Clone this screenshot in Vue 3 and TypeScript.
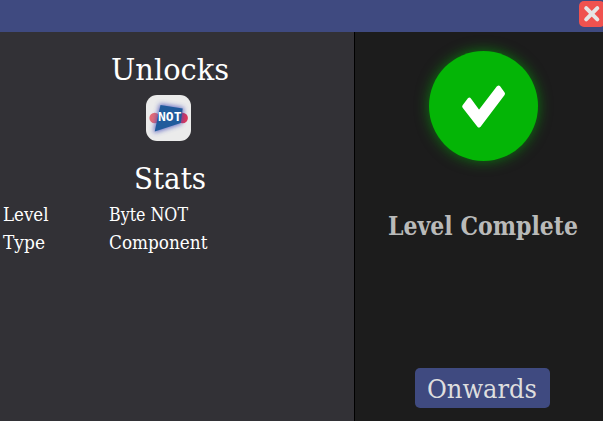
<script setup lang="ts">
interface Stat {
  label: string
  labelWidth: number
  value: string
  valueWidth: number
}

const stats: Stat[] = [
  { label: 'Level', labelWidth: 45.5, value: 'Byte NOT', valueWidth: 79 },
  { label: 'Type', labelWidth: 42, value: 'Component', valueWidth: 98.5 },
]
</script>

<template>
  <div class="window">
    <header class="titlebar">
      <button class="close" aria-label="Close">
        <svg width="26" height="26" viewBox="0 0 26 26">
          <path d="M7.2 7.2 L18.3 18.3 M18.3 7.2 L7.2 18.3" stroke="#e6e6e6" stroke-width="4" stroke-linecap="round" />
        </svg>
      </button>
    </header>
    <main class="content">
      <section class="details">
        <svg class="heading" width="118" height="32">
          <text x="0" y="24" textLength="118" lengthAdjust="spacingAndGlyphs">Unlocks</text>
        </svg>
        <div class="component-icon">
          <svg width="45" height="46" viewBox="0 0 45 46">
            <defs>
              <filter id="halo" x="-50%" y="-50%" width="200%" height="200%">
                <feGaussianBlur stdDeviation="2.6" />
              </filter>
            </defs>
            <circle cx="8.7" cy="23" r="5.3" fill="#e46c76" />
            <circle cx="36.6" cy="23" r="5.3" fill="#df3658" />
            <path d="M14.5 10 L36.7 13.5 L34.8 28 L8.7 36.5 Z" fill="#3f48b8" stroke="#3f48b8" stroke-width="2" opacity=".8" filter="url(#halo)" />
            <path d="M14.5 10 L36.7 13.5 L34.8 28 L8.7 36.5 Z" fill="#205b9c" />
            <text class="icon-text" x="12" y="26.3" textLength="23.5" lengthAdjust="spacingAndGlyphs">NOT</text>
          </svg>
        </div>
        <svg class="heading" width="72" height="32">
          <text x="0" y="24" textLength="72" lengthAdjust="spacingAndGlyphs">Stats</text>
        </svg>
        <div class="stats">
          <template v-for="stat in stats" :key="stat.label">
            <svg class="stat" width="106" height="28">
              <text x="0" y="20" :textLength="stat.labelWidth" lengthAdjust="spacingAndGlyphs">{{ stat.label }}</text>
            </svg>
            <svg class="stat" width="106" height="28">
              <text x="0" y="20" :textLength="stat.valueWidth" lengthAdjust="spacingAndGlyphs">{{ stat.value }}</text>
            </svg>
          </template>
        </div>
      </section>
      <aside class="result">
        <div class="badge">
          <svg width="109" height="110" viewBox="0 0 109 110">
            <path d="M40.3 48.7 L35.2 55.5 L50 74.5 L74 42.7 L69.5 36.5 L50 62 Z" fill="#fff" stroke="#fff" stroke-width="4" stroke-linejoin="round" />
          </svg>
        </div>
        <svg class="complete" width="190" height="36">
          <text x="0" y="25" textLength="190" lengthAdjust="spacingAndGlyphs">Level Complete</text>
        </svg>
        <button class="onwards">
          <svg width="110" height="40">
            <text x="0" y="30" textLength="110" lengthAdjust="spacingAndGlyphs">Onwards</text>
          </svg>
        </button>
      </aside>
    </main>
  </div>
</template>

<style>
body {
  margin: 0;
  overflow: hidden;
}
</style>

<style scoped>
.window {
  width: 603px;
  height: 421px;
  display: flex;
  flex-direction: column;
  overflow: hidden;
  background: #1c1c1c;
  font-family: "Roboto Slab", "DejaVu Serif Condensed", "DejaVu Serif", serif;
}
svg {
  display: block;
  flex: none;
  overflow: visible;
}
button {
  padding: 0;
  border: 0;
  font-family: inherit;
}
.titlebar {
  height: 32px;
  flex: none;
  display: flex;
  justify-content: flex-end;
  background: #3f4a80;
}
.close {
  width: 26px;
  height: 26px;
  margin: 1px -2px 0 0;
  border-radius: 5px;
  background: #f0524f;
}
.content {
  flex: 1;
  display: flex;
}
.details {
  width: 354px;
  box-sizing: border-box;
  flex: none;
  display: flex;
  flex-direction: column;
  align-items: center;
  padding: 24px 14px 0 0;
  background: #323136;
}
.heading text {
  font-size: 29px;
  fill: #fff;
}
.component-icon {
  width: 45px;
  height: 46px;
  margin: 7px 3px 24px 0;
  border-radius: 11px;
  background: #ebebeb;
}
.icon-text {
  font-family: "DejaVu Sans Mono", monospace;
  font-size: 13px;
  font-weight: bold;
  fill: #fff;
}
.stats {
  align-self: flex-start;
  display: grid;
  grid-template-columns: 106px 106px;
  padding-left: 3px;
  margin-top: 4px;
}
.stat text {
  font-size: 18px;
  fill: #fff;
}
.result {
  flex: 1;
  display: flex;
  flex-direction: column;
  align-items: center;
  border-left: 1px solid #000;
  padding: 19px 0 13px 8px;
}
.badge {
  width: 109px;
  height: 110px;
  border-radius: 50%;
  background: #04b506;
  box-shadow: 0 0 14px rgba(4, 181, 6, 0.6);
}
.complete {
  margin: 49px 1px 0 0;
}
.complete text {
  font-size: 26px;
  font-weight: bold;
  fill: #b9bab9;
}
.onwards {
  width: 135px;
  height: 40px;
  margin: auto 2px 0 0;
  display: flex;
  justify-content: center;
  border-radius: 5px;
  background: #3f4a80;
}
.onwards text {
  font-size: 26px;
  fill: #dedede;
}
</style>
